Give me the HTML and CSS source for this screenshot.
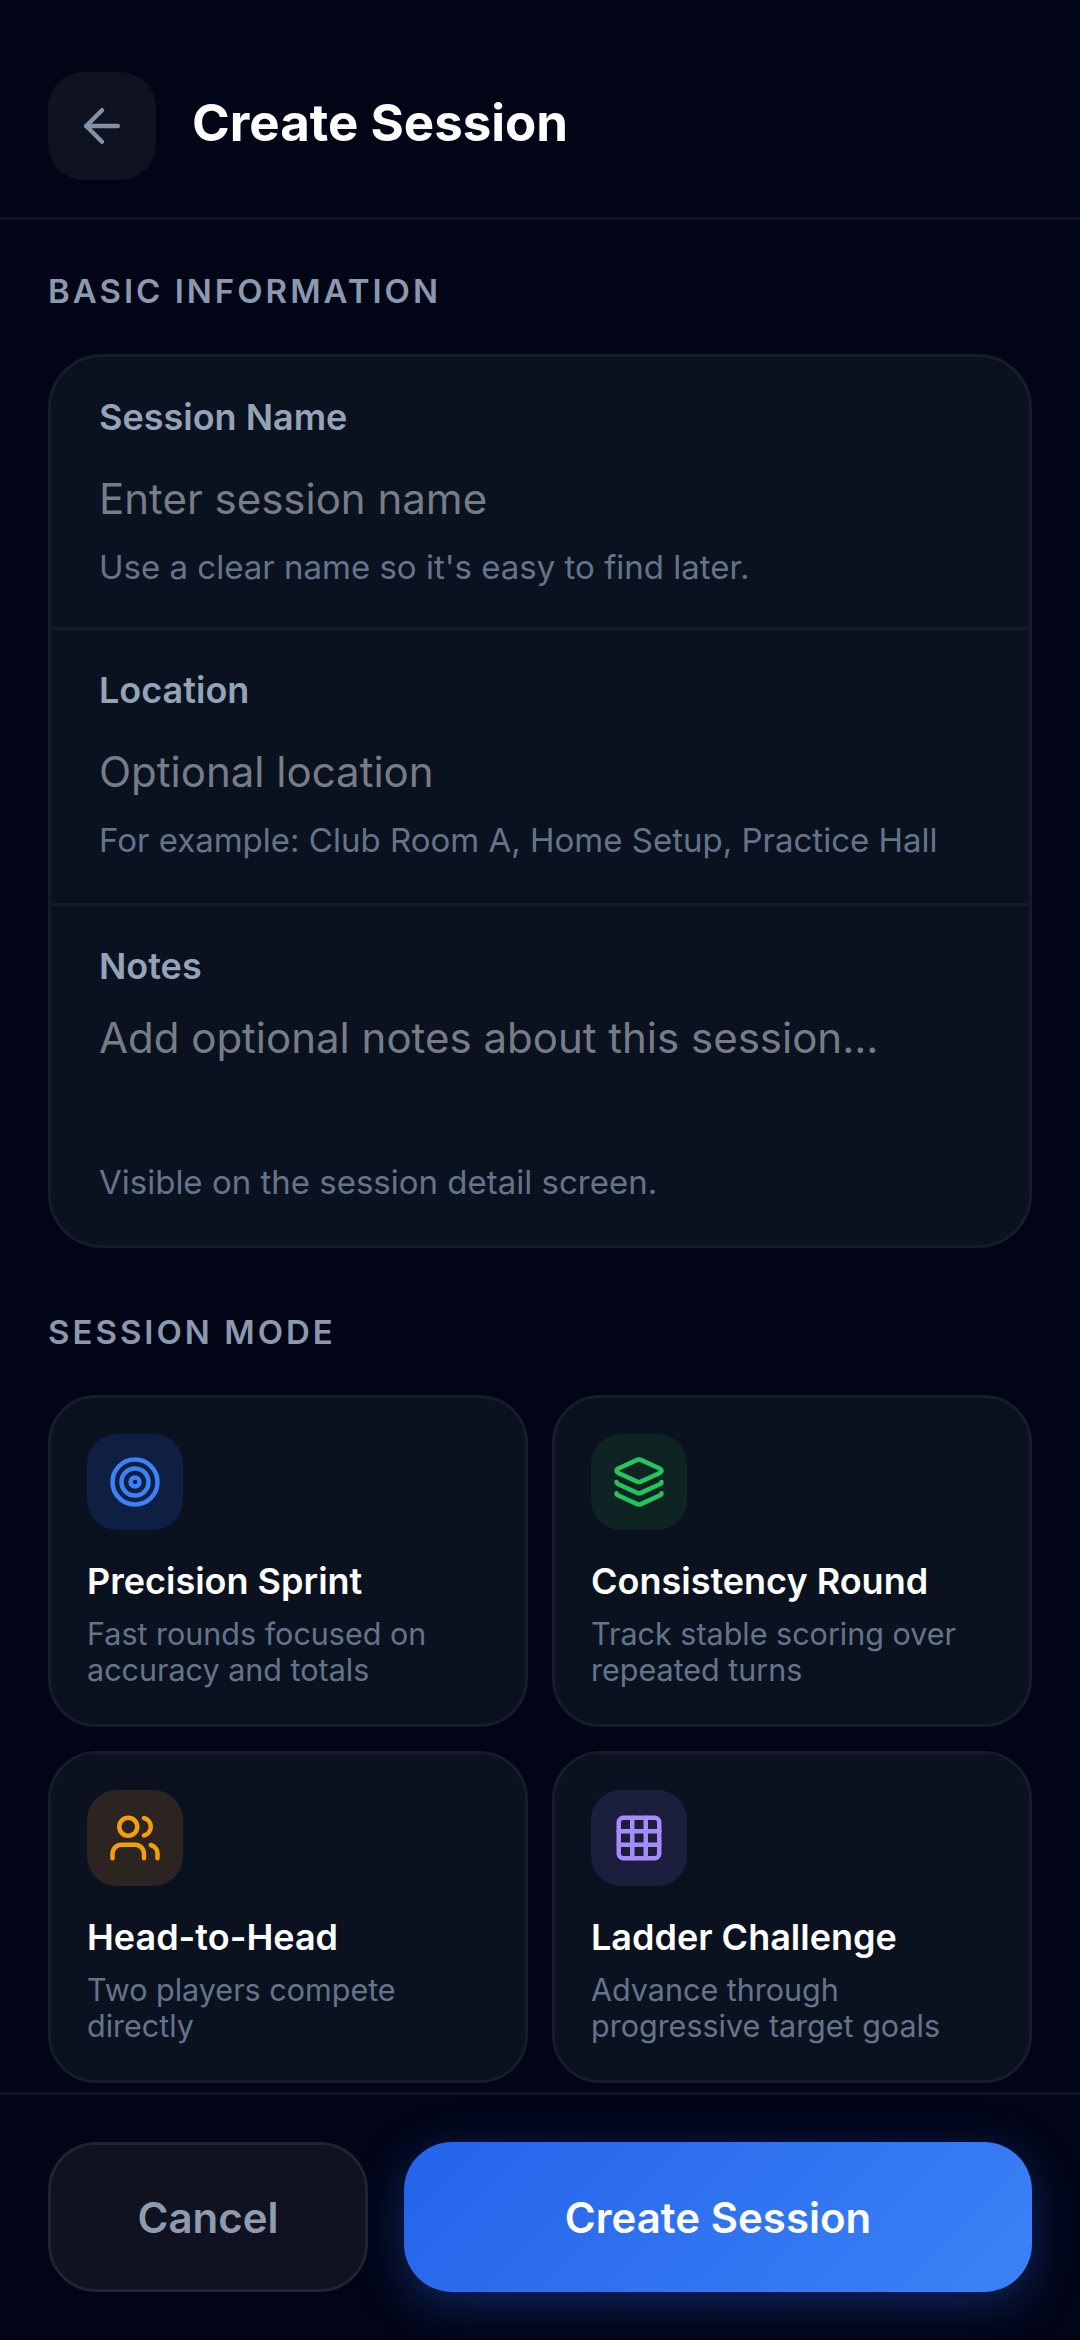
FILE: index.html
```html
<!DOCTYPE html>
<html lang="en">
<head>
    <meta charset="UTF-8">
    <meta name="viewport" content="width=device-width, initial-scale=1.0">
    <title>Create Session</title>
    <link rel="stylesheet" href="styles.css">
</head>
<body>
    <div class="screen">
        <header class="topbar">
            <button class="back-btn" type="button" aria-label="Back">
                <svg class="icon" viewBox="0 0 24 24"><path d="m12 19-7-7 7-7"/><path d="M19 12H5"/></svg>
            </button>
            <h1 class="page-title">Create Session</h1>
        </header>

        <main class="content">
            <h2 class="section-label">BASIC INFORMATION</h2>
            <div class="form-card">
                <div class="form-row row-name">
                    <div class="field-label">Session Name</div>
                    <div class="field-input">Enter session name</div>
                    <div class="field-help">Use a clear name so it's easy to find later.</div>
                </div>
                <div class="form-row row-location">
                    <div class="field-label">Location</div>
                    <div class="field-input">Optional location</div>
                    <div class="field-help">For example: Club Room A, Home Setup, Practice Hall</div>
                </div>
                <div class="form-row row-notes">
                    <div class="field-label">Notes</div>
                    <div class="field-input notes-input">Add optional notes about this session...</div>
                    <div class="field-help">Visible on the session detail screen.</div>
                </div>
            </div>

            <h2 class="section-label mode-label">SESSION MODE</h2>
            <div class="mode-grid">
                <div class="mode-card">
                    <div class="mode-icon blue">
                        <svg class="icon" viewBox="0 0 24 24"><circle cx="12" cy="12" r="10"/><circle cx="12" cy="12" r="6"/><circle cx="12" cy="12" r="2"/></svg>
                    </div>
                    <div class="mode-title">Precision Sprint</div>
                    <div class="mode-desc">Fast rounds focused on accuracy and totals</div>
                </div>
                <div class="mode-card">
                    <div class="mode-icon green">
                        <svg class="icon" viewBox="0 0 24 24"><path d="M12.83 2.18a2 2 0 0 0-1.66 0L2.6 6.08a1 1 0 0 0 0 1.83l8.58 3.91a2 2 0 0 0 1.66 0l8.58-3.9a1 1 0 0 0 0-1.83z"/><path d="M2 12a1 1 0 0 0 .58.91l8.6 3.91a2 2 0 0 0 1.65 0l8.58-3.9A1 1 0 0 0 22 12"/><path d="M2 17a1 1 0 0 0 .58.91l8.6 3.91a2 2 0 0 0 1.65 0l8.58-3.9A1 1 0 0 0 22 17"/></svg>
                    </div>
                    <div class="mode-title">Consistency Round</div>
                    <div class="mode-desc">Track stable scoring over repeated turns</div>
                </div>
                <div class="mode-card">
                    <div class="mode-icon amber">
                        <svg class="icon" viewBox="0 0 24 24"><path d="M16 21v-2a4 4 0 0 0-4-4H6a4 4 0 0 0-4 4v2"/><circle cx="9" cy="7" r="4"/><path d="M22 21v-2a4 4 0 0 0-3-3.87"/><path d="M16 3.13a4 4 0 0 1 0 7.75"/></svg>
                    </div>
                    <div class="mode-title">Head-to-Head</div>
                    <div class="mode-desc">Two players compete directly</div>
                </div>
                <div class="mode-card">
                    <div class="mode-icon purple">
                        <svg class="icon" viewBox="0 0 24 24"><rect x="3" y="3" width="18" height="18" rx="2"/><path d="M3 9h18"/><path d="M3 15h18"/><path d="M9 3v18"/><path d="M15 3v18"/></svg>
                    </div>
                    <div class="mode-title">Ladder Challenge</div>
                    <div class="mode-desc">Advance through progressive target goals</div>
                </div>
            </div>
        </main>

        <footer class="actions">
            <button class="btn btn-cancel" type="button">Cancel</button>
            <button class="btn btn-create" type="button">Create Session</button>
        </footer>
    </div>
</body>
</html>
```

FILE: styles.css
```css
* {
    box-sizing: border-box;
}

body {
    margin: 0;
    background-color: #020516;
    font-family: Inter, "Noto Sans", sans-serif;
}

.screen {
    display: flex;
    flex-direction: column;
    height: 2340px;
    overflow: hidden;
}

.icon {
    display: block;
    width: 54px;
    height: 54px;
    fill: none;
    stroke: currentColor;
    stroke-width: 2;
    stroke-linecap: round;
    stroke-linejoin: round;
}

/* top bar */
.topbar {
    display: flex;
    align-items: center;
    gap: 36px;
    height: 220px;
    padding: 72px 48px 37px;
    border-bottom: 3px solid #0e1322;
}

.back-btn {
    display: flex;
    align-items: center;
    justify-content: center;
    width: 108px;
    height: 108px;
    padding: 0;
    border: none;
    border-radius: 36px;
    background-color: #0f121f;
    color: #8391a7;
}

.page-title {
    margin: 0 0 8px;
    font-size: 51px;
    font-weight: 700;
    color: #fff;
}

/* scroll area */
.content {
    flex: 1;
    min-height: 0;
    padding: 51px 48px 0;
}

.section-label {
    margin: 0 0 43px;
    font-size: 33px;
    line-height: 40px;
    font-weight: 600;
    letter-spacing: 3px;
    color: #8b98ae;
}

.mode-label {
    margin-top: 64px;
}

.form-card {
    border: 3px solid #161c2a;
    border-radius: 54px;
    background-color: #0b121f;
}

.form-row {
    padding: 38px 48px 0;
    border-bottom: 3px solid #141b28;
}

.row-name {
    height: 273px;
}

.row-location {
    height: 276px;
}

.row-notes {
    height: 339px;
    border-bottom: none;
}

.field-label {
    font-size: 36px;
    line-height: 44px;
    font-weight: 600;
    color: #94a3b8;
}

.field-input {
    margin-top: 30px;
    font-size: 42px;
    line-height: 60px;
    color: #777c86;
}

.notes-input {
    height: 136px;
    margin-top: 20px;
}

.field-help {
    margin-top: 16px;
    font-size: 33px;
    line-height: 44px;
    color: #64748b;
}

/* mode cards */
.mode-grid {
    display: grid;
    grid-template-columns: 1fr 1fr;
    gap: 24px;
}

.mode-card {
    height: 332px;
    padding: 36px;
    border: 3px solid #161c2a;
    border-radius: 48px;
    background-color: #0b121f;
}

.mode-icon {
    display: flex;
    align-items: center;
    justify-content: center;
    width: 96px;
    height: 96px;
    border-radius: 30px;
}

.blue {
    background-color: #0e1f42;
    color: #3b82f6;
}

.green {
    background-color: #0e2423;
    color: #22c55e;
}

.amber {
    background-color: #2b2420;
    color: #f59e0b;
}

.purple {
    background-color: #1b1e3c;
    color: #a78bfa;
}

.mode-title {
    margin-top: 27px;
    font-size: 36px;
    line-height: 48px;
    font-weight: 600;
    color: #fff;
}

.mode-desc {
    margin-top: 11px;
    font-size: 30.5px;
    line-height: 36px;
    color: #64748b;
}

/* bottom actions */
.actions {
    display: flex;
    gap: 36px;
    height: 248px;
    padding: 47px 48px 48px;
    border-top: 3px solid #0e1322;
}

.btn {
    height: 150px;
    border-radius: 48px;
    font-family: inherit;
    font-size: 42px;
    font-weight: 600;
}

.btn-cancel {
    flex: 0 0 320px;
    border: 3px solid #1f2432;
    background-color: #10131f;
    color: #8f9bae;
}

.btn-create {
    flex: 1;
    border: none;
    background: linear-gradient(135deg, #2563eb, #3b82f6);
    box-shadow: 0 12px 48px rgba(37, 99, 235, 0.35);
    color: #fff;
}
```
